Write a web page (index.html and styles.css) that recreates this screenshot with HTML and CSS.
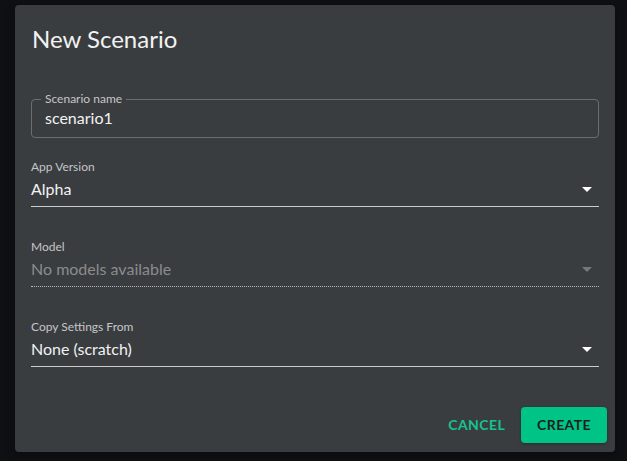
FILE: index.html
```html
<!DOCTYPE html>
<html>
<head>
<meta charset="utf-8">
<link rel="stylesheet" href="styles.css">
</head>
<body>
<div class="dialog">
  <h2 class="title">New Scenario</h2>
  <div class="content">
    <fieldset class="outlined">
      <legend>Scenario name</legend>
      <div class="outlined-value">scenario1</div>
    </fieldset>

    <div class="field">
      <div class="label">App Version</div>
      <div class="select">
        <span class="value">Alpha</span>
        <svg class="arrow" viewBox="0 0 24 24" width="24" height="24"><path d="M7 10l5 5 5-5z"/></svg>
      </div>
    </div>

    <div class="field disabled">
      <div class="label">Model</div>
      <div class="select">
        <span class="value">No models available</span>
        <svg class="arrow" viewBox="0 0 24 24" width="24" height="24"><path d="M7 10l5 5 5-5z"/></svg>
      </div>
    </div>

    <div class="field">
      <div class="label">Copy Settings From</div>
      <div class="select">
        <span class="value">None (scratch)</span>
        <svg class="arrow" viewBox="0 0 24 24" width="24" height="24"><path d="M7 10l5 5 5-5z"/></svg>
      </div>
    </div>
  </div>
  <div class="actions">
    <button class="btn btn-text">Cancel</button>
    <button class="btn btn-primary">Create</button>
  </div>
</div>
</body>
</html>
```

FILE: styles.css
```css
html, body {
  margin: 0;
  padding: 0;
}
body {
  background: #0e1013;
  font-family: "Lato", "Nunito", "Noto Sans", sans-serif;
  width: 627px;
  height: 461px;
  overflow: hidden;
}
.dialog {
  margin: 5px 0 0 15px;
  width: 600px;
  height: 447px;
  box-sizing: border-box;
  background: #3a3d40;
  border-radius: 4px;
  padding: 0 16px 9px 16px;
  display: flex;
  flex-direction: column;
  box-shadow: 0 2px 8px rgba(0,0,0,0.4);
}
.title {
  margin: 0;
  padding-top: 18px;
  font-size: 24px;
  line-height: 32px;
  font-weight: 400;
  color: #f2f2f2;
  padding-left: 1px;
}
.content {
  margin-top: 37px;
  flex: 1;
  display: flex;
  flex-direction: column;
}
.outlined {
  margin: 0;
  border: 1px solid #6b6e71;
  border-radius: 4px;
  padding: 0 9px 7px 9px;
  min-width: 0;
}
.outlined legend {
  padding: 0 4px;
  font-size: 12px;
  line-height: 14px;
  color: #c4c6c8;
}
.outlined-value {
  padding-left: 4px;
  font-size: 16px;
  line-height: 24px;
  color: #f2f2f2;
}
.field {
  margin-top: 22px;
}
.field + .field {
  margin-top: 33px;
}
.label {
  font-size: 12px;
  line-height: 14px;
  color: #c4c6c8;
}
.select {
  margin-top: 3px;
  display: flex;
  align-items: center;
  justify-content: space-between;
  border-bottom: 1px solid #c9cbcd;
  padding-bottom: 5px;
}
.value {
  font-size: 16px;
  line-height: 24px;
  color: #f2f2f2;
}
.arrow {
  display: block;
  fill: #ffffff;
}
.disabled .value {
  color: #8a8c8e;
}
.disabled .arrow {
  fill: #75787a;
}
.disabled .select {
  border-bottom: 1px dotted #b8babc;
}
.actions {
  display: flex;
  justify-content: flex-end;
  align-items: center;
  gap: 8px;
  padding-right: 8px;
  margin-right: -16px;
}
.btn {
  font-family: inherit;
  font-size: 14px;
  font-weight: 700;
  text-transform: uppercase;
  letter-spacing: 0.4px;
  border: none;
  border-radius: 4px;
  height: 36px;
  padding: 0 16px 2px 16px;
  cursor: pointer;
}
.btn-text {
  background: transparent;
  color: #14c48b;
  padding: 0 8px 2px 8px;
}
.btn-primary {
  background: #00c386;
  color: #1c1f21;
  box-shadow: 0 1px 3px rgba(0,0,0,0.3);
}
```
